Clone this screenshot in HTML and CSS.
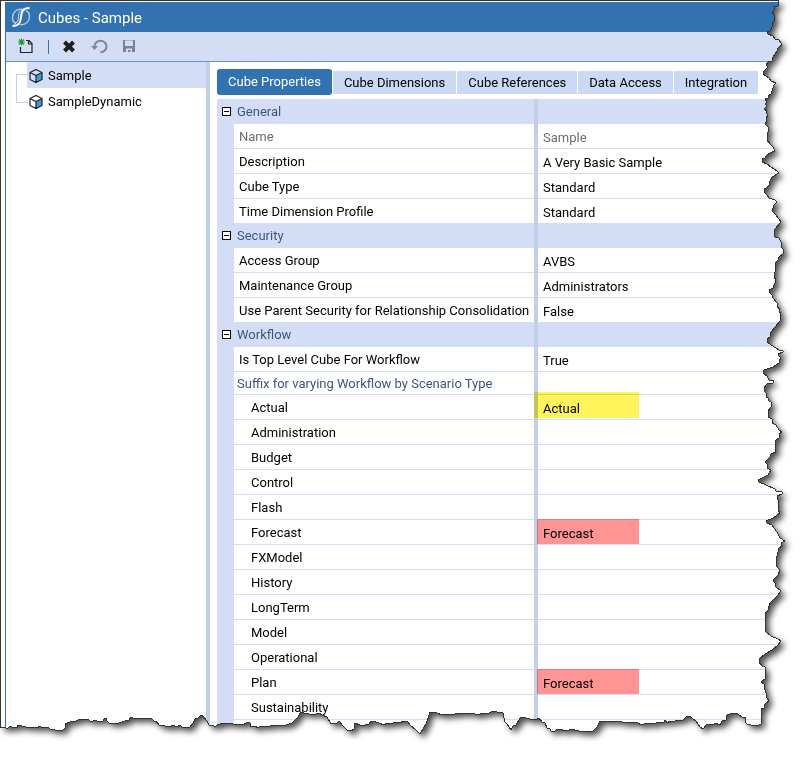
FILE: index.html
```html
<!DOCTYPE html>
<html lang="en">

<head>
	<meta charset="utf-8" />
	<title>Cubes - Sample</title>
	<link rel="stylesheet" href="styles.css">
</head>

<body>
	<div class="page">
		<div class="window">
			<header class="titlebar">
				<svg class="logo" width="20" height="20" viewBox="0 0 20 20" fill="none" stroke="#fff">
					<path d="M11 2.500C5 1.500 1.500 6 1.500 10.500c0 3 1.500 5 3.500 5.500" stroke="#a9c8e4" stroke-width="1.500" />
					<path d="M9 17.500c6 1 9.500-3.500 9.500-8 0-3-1.500-5-3.500-5.500" stroke="#a9c8e4" stroke-width="1.500" />
					<path d="M18.500 1C12 1 10.500 4 10 10S8 18.500 1.500 19" stroke-width="2" />
					<path d="M14.500 1.500C9 2.500 7.800 5 7.500 9.500S6 16 3 17.500" stroke="#d5e5f3" stroke-width="1" />
				</svg>
				<h1>Cubes - Sample</h1>
			</header>

			<div class="toolbar">
				<button type="button" aria-label="New cube">
					<svg width="16" height="16" viewBox="0 0 16 16" fill="none">
						<path d="M8 1.500h3l3 3v9H2.500V8M10.500 1.500v3.500H14" stroke="#222" stroke-width="1.200" />
						<path d="M3.500-.5v7M0 3h7M1 .5l5 5M6 .5l-5 5" stroke="#1c9a2c" stroke-width="1.200" />
					</svg>
				</button>
				<span class="separator"></span>
				<button type="button" aria-label="Delete">
					<svg width="16" height="16" viewBox="0 0 16 16" fill="none">
						<path d="M1.500 3l9 9M10.500 3l-9 9" stroke="#1f1f1f" stroke-width="4" />
					</svg>
				</button>
				<button type="button" aria-label="Undo">
					<svg width="16" height="16" viewBox="0 0 16 16" fill="none">
						<path d="M1.500 8A6 5.700 0 1 1 7.500 13.200" stroke="#808692" stroke-width="2" />
						<path d="M-2 7h7L1.500 11z" fill="#808692" />
					</svg>
				</button>
				<button type="button" aria-label="Save">
					<svg width="16" height="16" viewBox="0 0 16 16" fill="none">
						<path d="M0 1h2v6h8V1h2v12H0z" fill="#7b8290" />
						<path d="M2 1.500h8" stroke="#8cc3ec" />
						<path d="M3 9.500h6V13H7.500v-2H5v2H3z" fill="#d3def6" />
					</svg>
				</button>
			</div>

			<div class="content">
				<nav class="tree">
					<ul>
						<li>
							<a href="#" class="selected">
								<svg width="14" height="16" viewBox="0 0 14 16">
									<path d="M7 8l6-3v6.500L7 14.500z" fill="#3b9ddb" />
									<path d="M7 1.500l6 3v7l-6 3-6-3v-7zM1 4.500l6 3 6-3M7 7.500v7" fill="none" stroke="#222" stroke-width="1.200" />
								</svg>
								Sample
							</a>
						</li>
						<li>
							<a href="#">
								<svg width="14" height="16" viewBox="0 0 14 16">
									<path d="M7 8l6-3v6.500L7 14.500z" fill="#3b9ddb" />
									<path d="M7 1.500l6 3v7l-6 3-6-3v-7zM1 4.500l6 3 6-3M7 7.500v7" fill="none" stroke="#222" stroke-width="1.200" />
								</svg>
								SampleDynamic
							</a>
						</li>
					</ul>
				</nav>

				<main class="details">
					<div class="tabs" role="tablist">
						<button type="button" role="tab" aria-selected="true" class="active">Cube Properties</button>
						<button type="button" role="tab">Cube Dimensions</button>
						<button type="button" role="tab">Cube References</button>
						<button type="button" role="tab">Data Access</button>
						<button type="button" role="tab">Integration</button>
					</div>

					<table class="properties">
						<colgroup>
							<col class="col-toggle">
							<col class="col-name">
							<col>
						</colgroup>
						<tbody>
							<tr class="group">
								<td><button type="button" class="toggle" aria-label="Collapse General"></button></td>
								<th>General</th>
								<td></td>
							</tr>
							<tr class="readonly"><td></td><th>Name</th><td>Sample</td></tr>
							<tr><td></td><th>Description</th><td>A Very Basic Sample</td></tr>
							<tr><td></td><th>Cube Type</th><td>Standard</td></tr>
							<tr class="last"><td></td><th>Time Dimension Profile</th><td>Standard</td></tr>
						</tbody>
						<tbody>
							<tr class="group">
								<td><button type="button" class="toggle" aria-label="Collapse Security"></button></td>
								<th>Security</th>
								<td></td>
							</tr>
							<tr><td></td><th>Access Group</th><td>AVBS</td></tr>
							<tr><td></td><th>Maintenance Group</th><td>Administrators</td></tr>
							<tr class="last"><td></td><th>Use Parent Security for Relationship Consolidation</th><td>False</td></tr>
						</tbody>
						<tbody>
							<tr class="group">
								<td><button type="button" class="toggle" aria-label="Collapse Workflow"></button></td>
								<th>Workflow</th>
								<td></td>
							</tr>
							<tr><td></td><th>Is Top Level Cube For Workflow</th><td>True</td></tr>
							<tr class="subheading"><td></td><th>Suffix for varying Workflow by Scenario Type</th><td></td></tr>
						</tbody>
						<tbody class="nested">
							<tr><td></td><th>Actual</th><td class="mark yellow">Actual</td></tr>
							<tr><td></td><th>Administration</th><td></td></tr>
							<tr><td></td><th>Budget</th><td></td></tr>
							<tr><td></td><th>Control</th><td></td></tr>
							<tr><td></td><th>Flash</th><td></td></tr>
							<tr><td></td><th>Forecast</th><td class="mark red">Forecast</td></tr>
							<tr><td></td><th>FXModel</th><td></td></tr>
							<tr><td></td><th>History</th><td></td></tr>
							<tr><td></td><th>LongTerm</th><td></td></tr>
							<tr><td></td><th>Model</th><td></td></tr>
							<tr><td></td><th>Operational</th><td></td></tr>
							<tr><td></td><th>Plan</th><td class="mark red">Forecast</td></tr>
							<tr><td></td><th>Sustainability</th><td></td></tr>
							<tr><td></td><th></th><td></td></tr>
						</tbody>
					</table>
				</main>
			</div>
		</div>

		<!-- Torn paper edge over the right and bottom sides -->
		<svg class="torn-edge" viewBox="0 0 806 757" preserveAspectRatio="none" aria-hidden="true">
			<defs>
				<path id="paper" d="M.5 .5H774L779 1 778 6 774 7 774 10 772 12 774 15 775 20 772 24 772 27 770 31 767 32 768 34 773 36 775 39 779 40 781 43 782 45 778 48 777 51 773 57 772 61 768 62 766 65 768 67 766 69 764 71 763 74 769 78 771 81 776 83 773 86 773 88 771 94 768 96 768 98 765 99 767 102 765 104 767 106 764 109 767 111 766 113 768 115 766 118 767 121 765 124 768 127 769 130 767 134 767 140 770 144 773 147 775 151 770 153 767 155 765 158 762 159 762 162 767 164 771 167 777 171 779 173 772 177 770 181 769 185 766 188 764 189 764 192 767 195 769 198 775 200 777 202 774 205 773 208 772 211 776 215 781 222 775 229 774 233 775 237 779 238 781 242 781 246 784 251 783 254 779 257 778 260 776 262 775 267 775 272 774 276 776 281 774 285 773 288 769 290 769 292 772 295 773 298 777 303 777 307 780 309 779 312 781 313 780 321 775 327 771 332 770 337 767 339 767 342 771 345 776 348 779 350 783 351 783 352 778 354 779 356 781 358 779 361 779 363 773 367 764 370 763 373 767 376 769 380 774 381 773 383 767 384 764 388 764 391 767 394 766 397 768 398 769 401 771 402 771 407 768 411 768 417 772 419 772 423 776 425 779 430 782 432 779 434 779 438 775 441 776 444 775 447 776 452 771 454 770 457 765 462 768 465 767 468 771 470 768 475 762 478 758 480 759 482 766 485 775 489 776 491 782 492 782 494 777 496 778 500 778 505 779 507 778 510 780 513 773 518 766 521 767 523 772 525 775 529 778 534 780 538 785 541 781 543 782 546 778 549 778 552 776 560 776 566 780 570 778 575 775 578 773 580 775 583 776 587 781 591 778 595 774 599 770 603 768 610 765 614 765 620 766 632 771 636 778 639 781 641 778 645 772 650 765 654 760 658 759 662 762 666 765 667 765 679 761 682 764 684 765 690 766 693 767 698 769 701 765 704 764 708 761 709 761 724 759 725 755 725 753 726 751 725 747 724 745 722 745 717 742 717 739 715 737 713 735 714 733 713 727 715 726 720 722 721 720 725 715 723 713 725 707 724 703 729 700 727 696 721 689 716 686 717 683 720 677 720 675 721 670 721 667 723 665 720 664 722 657 722 655 724 647 723 641 725 638 723 635 722 631 723 626 722 625 723 619 721 600 721 597 727 593 731 589 732 579 731 570 729 569 730 565 731 560 729 557 729 555 731 551 731 550 729 547 728 545 723 542 722 539 718 536 720 530 719 522 717 520 718 516 725 513 726 511 730 507 724 505 722 503 713 497 712 493 711 489 713 483 713 477 715 473 713 467 713 460 713 455 714 448 714 442 715 437 713 430 712 428 718 426 724 423 729 420 734 416 730 410 725 408 722 403 721 400 723 395 722 391 724 387 723 384 725 379 723 376 722 371 721 369 724 365 725 360 725 355 723 354 729 351 731 347 730 343 726 339 721 337 723 331 724 327 717 322 715 319 713 316 714 309 714 304 713 301 712 298 717 295 720 292 723 286 725 273 725 270 726 260 726 258 728 255 726 251 727 250 723 248 722 243 725 240 724 233 724 227 723 220 724 217 725 215 727 213 725 209 725 207 721 204 717 201 715 198 718 195 719 193 723 189 728 186 727 183 728 180 725 177 727 173 725 170 727 165 726 159 725 156 721 154 721 151 718 148 719 143 718 135 719 131 717 129 720 125 721 122 722 119 723 109 723 107 721 106 718 104 719 103 721 97 721 95 720 91 722 88 719 80 719 76 721 70 722 65 724 65 728 63 730 55 730 50 729 48 727 42 728 40 726 37 728 32 727 26 727 22 726 18 725 17 728 12 727 10 726 7 729 5 727 .5 727Z" />
				<filter id="shadow" x="-5%" y="-5%" width="110%" height="110%">
					<feGaussianBlur stdDeviation="3" />
				</filter>
				<mask id="cutout" maskUnits="userSpaceOnUse" x="0" y="0" width="806" height="757">
					<path d="M0 0H806V757H0Z" fill="#fff" />
					<use href="#paper" fill="#000" />
				</mask>
			</defs>
			<g mask="url(#cutout)">
				<path d="M0 0H806V757H0Z" fill="#fff" />
				<g filter="url(#shadow)">
					<use href="#paper" x="4" y="4" fill="#000" fill-opacity=".7" />
				</g>
			</g>
			<use href="#paper" fill="none" stroke="#333" shape-rendering="crispEdges" />
		</svg>
	</div>
</body>

</html>
```
FILE: styles.css
```css
* {
	box-sizing: border-box;
}

body {
	margin: 0;
	background-color: #fff;
	color: #000;
	font-family: Roboto, "Open Sans", sans-serif;
	font-size: 13px;
	line-height: 18px;
}

button {
	border: 0;
	padding: 0;
	background: none;
	font: inherit;
	color: inherit;
	cursor: pointer;
}

.page {
	position: relative;
	display: flex;
	height: 100vh;
	overflow: hidden;
	padding: 2px 0 0 5px;
}

.window {
	flex: 1;
	display: flex;
	flex-direction: column;
	border-left: 1px solid #3272b0;
}

/* Title bar and toolbar */
.titlebar {
	display: flex;
	align-items: center;
	gap: 7px;
	height: 30px;
	flex: none;
	padding-left: 5px;
	background-color: #3272b0;
	color: #fff;
}

.titlebar h1 {
	margin: 0;
	padding-top: 2px;
	font-size: 15px;
	font-weight: normal;
}

.toolbar {
	display: flex;
	align-items: center;
	gap: 14px;
	height: 30px;
	flex: none;
	padding-left: 12px;
	background-color: #d3def6;
	border-bottom: 1px solid #6d8fcb;
}

.toolbar button {
	height: 16px;
}

.toolbar svg {
	display: block;
	overflow: visible;
}

.separator {
	width: 1px;
	height: 14px;
	background-color: #3272b0;
}

.content {
	flex: 1;
	display: flex;
}

/* Cube list on the left */
.tree {
	width: 204px;
	flex: none;
	border-right: 4px solid #c2cfe9;
}

.tree ul {
	position: relative;
	margin: 0;
	padding: 0 0 0 21px;
	list-style: none;
}

.tree ul::before {
	content: "";
	position: absolute;
	left: 10px;
	top: 12px;
	width: 11px;
	height: 27px;
	border: 1px solid #c2cfe9;
	border-right: 0;
}

.tree a {
	display: flex;
	align-items: center;
	gap: 5px;
	height: 26px;
	padding: 1px 0 0 2px;
	color: #000;
	text-decoration: none;
}

.tree a.selected {
	background-color: #d3def6;
}

/* Tabs */
.details {
	flex: 1;
	padding: 7px 0 0 7px;
}

.tabs {
	display: flex;
	align-items: center;
	gap: 1px;
	height: 26px;
	margin-bottom: 4px;
}

.tabs button {
	height: 23px;
	padding: 2px 11px 0;
	background-color: #cad9f4;
	white-space: nowrap;
}

.tabs .active {
	height: 26px;
	padding-top: 0;
	border-radius: 3px;
	background-color: #3272b0;
	color: #fff;
}

/* Property grid */
.properties {
	width: 100%;
	table-layout: fixed;
	border-spacing: 0;
}

.col-toggle {
	width: 17px;
}

.col-name {
	width: 300px;
}

.properties th,
.properties td {
	height: 25px;
	padding: 1px 0 0 5px;
	box-shadow: inset 0 -1px #d3def6;
	font-weight: normal;
	text-align: left;
	white-space: nowrap;
}

.properties td:first-child {
	padding: 0 0 0 5px;
	background-color: #d3def6;
}

.properties td:last-child {
	position: relative;
	padding-top: 3px;
	border-left: 4px solid #c2cfe9;
}

.properties .last th,
.properties .last td {
	height: 24px;
	box-shadow: none;
}

.properties .group th,
.properties .group td {
	background-color: #d3def6;
	color: #3e5480;
}

.properties .group th,
.properties .subheading th {
	padding-left: 3px;
	color: #3e5480;
}

.properties .subheading th,
.properties .subheading td {
	height: 23px;
}

.properties .readonly th,
.properties .readonly td {
	color: #6d6d6d;
}

.properties .nested th {
	padding-left: 17px;
}

.toggle {
	display: block;
	width: 9px;
	height: 9px;
	border: 1px solid #000;
	background: linear-gradient(#000, #000) center / 5px 1px no-repeat #fff;
}

/* Highlighter marks over values */
.mark::after {
	content: "";
	position: absolute;
	left: -1px;
	top: -1px;
	width: 102px;
	height: 25px;
	background-color: #ff9494;
	mix-blend-mode: multiply;
}

.mark.yellow::after {
	left: -4px;
	top: -3px;
	width: 105px;
	height: 26px;
	background-color: #fff45a;
}

.torn-edge {
	position: absolute;
	left: 0;
	top: 0;
	width: 100%;
	height: 100%;
	pointer-events: none;
}
```
